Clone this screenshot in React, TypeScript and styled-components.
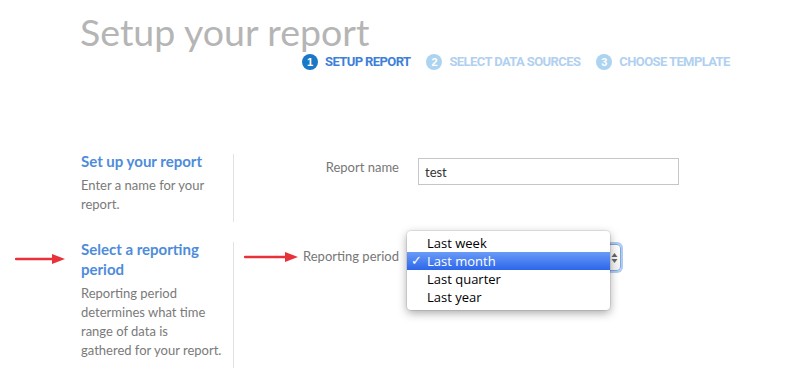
import React from "react";
import styled, { createGlobalStyle } from "styled-components";

const GlobalStyle = createGlobalStyle`
  html, body { margin: 0; padding: 0; background: #ffffff; }
  body { font-family: Lato, "Open Sans", sans-serif; }
  * { box-sizing: border-box; }
`;

const Page = styled.div`
  width: 800px;
  height: 376px;
  overflow: hidden;
  background: #fff;
`;

const Header = styled.header`
  padding: 12px 0 0 80px;
`;

const Title = styled.h1`
  margin: 0;
  font-family: Lato, sans-serif;
  font-weight: 400;
  font-size: 37.5px;
  line-height: 40px;
  color: #b5b5b5;
`;

const Steps = styled.ol`
  list-style: none;
  margin: 2px 0 0 222px;
  padding: 0;
  display: flex;
  align-items: center;
  gap: 16px;
`;

const Step = styled.li<{ $active?: boolean }>`
  display: flex;
  align-items: center;
  gap: 7px;
  font-family: Roboto, sans-serif;
  font-weight: 700;
  font-size: 13px;
  letter-spacing: -0.6px;
  line-height: 16px;
  color: ${(p) => (p.$active ? "#3d7fd9" : "#b1d0f0")};
`;

const StepNum = styled.span<{ $active?: boolean }>`
  width: 16px;
  height: 16px;
  border-radius: 50%;
  background: ${(p) => (p.$active ? "#1b78c6" : "#acd3ef")};
  color: #fff;
  font-family: "Liberation Sans", sans-serif;
  font-weight: 700;
  font-size: 11px;
  letter-spacing: 0;
  display: flex;
  align-items: center;
  justify-content: center;
`;

const Main = styled.main`
  margin-top: 81px;
  display: flex;
  flex-direction: column;
  gap: 17px;
`;

const Section = styled.section`
  display: grid;
  grid-template-columns: 81px 144px 8px 1px 1fr;
  align-items: stretch;
`;

const Gutter = styled.div`
  padding: 10px 0 0 15px;
`;

const Info = styled.div`
  padding-bottom: 9px;
`;

const InfoTitle = styled.h2`
  margin: 0;
  font-family: Lato, sans-serif;
  font-weight: 700;
  font-size: 15px;
  line-height: 20px;
  color: #4d8cdb;
`;

const InfoText = styled.p`
  margin: 5px 0 0;
  font-family: Lato, sans-serif;
  font-size: 13px;
  line-height: 18.7px;
  color: #7a7a7a;
`;

const Divider = styled.div`
  grid-column: 4;
  margin-top: 3px;
  background: #e2e2e2;
`;

const FormRow = styled.div<{ $top: number }>`
  display: flex;
  align-items: flex-start;
  gap: 19px;
  padding-top: ${(p) => p.$top}px;
`;

const Label = styled.label<{ $top: number }>`
  width: 165px;
  margin-top: ${(p) => p.$top}px;
  display: flex;
  justify-content: flex-end;
  align-items: center;
  gap: 5px;
  font-family: Lato, sans-serif;
  font-size: 13px;
  line-height: 19px;
  color: #777;
`;

const TextInput = styled.div`
  width: 261px;
  height: 27px;
  border: 1px solid #c6c6c6;
  padding-left: 6px;
  display: flex;
  align-items: center;
  font-family: Lato, sans-serif;
  font-size: 13px;
  color: #333;
`;

const SelectWrap = styled.div`
  position: relative;
  margin-left: -9px;
  width: 212px;
  height: 27px;
`;

const SelectBox = styled.div`
  width: 100%;
  height: 100%;
  border: 1px solid #7fa9e0;
  border-radius: 4px;
  box-shadow: 0 0 0 2px rgba(110, 160, 230, 0.55);
  background: linear-gradient(#fff, #f2f2f2);
  display: flex;
  justify-content: flex-end;
  align-items: center;
  padding-right: 2px;
`;

const Menu = styled.ul`
  position: absolute;
  left: -2px;
  top: -13px;
  width: 203px;
  margin: 0;
  padding: 3px 0 4px;
  list-style: none;
  background: #fff;
  border-radius: 4px;
  box-shadow: 0 3px 10px rgba(0, 0, 0, 0.35), 0 0 0 1px rgba(0, 0, 0, 0.08);
`;

const MenuItem = styled.li<{ $selected?: boolean }>`
  position: relative;
  height: 18px;
  line-height: 18px;
  padding-left: 20px;
  font-family: "Open Sans", sans-serif;
  font-size: 13px;
  font-weight: 500;
  color: ${(p) => (p.$selected ? "#fff" : "#000")};
  background: ${(p) =>
    p.$selected ? "linear-gradient(#6a9bf7, #2c66ea)" : "transparent"};
`;

const Check = styled.span`
  position: absolute;
  left: 4px;
  top: 0;
  font-family: "DejaVu Sans", sans-serif;
  font-weight: 700;
  font-size: 13px;
`;

const Arrow = ({ width = 50 }: { width?: number }) => (
  <svg width={width} height="12" viewBox={`0 0 ${width} 12`}>
    <line x1="1" y1="6" x2={width - 11} y2="6" stroke="#e8323a" strokeWidth="2.4" strokeLinecap="round" />
    <polygon points={`${width - 13},1 ${width},6 ${width - 13},11`} fill="#e8323a" />
  </svg>
);

const Updown = () => (
  <svg width="7" height="12" viewBox="0 0 7 12">
    <polygon points="3.5,1 6.5,5 0.5,5" fill="#666" />
    <polygon points="3.5,11 6.5,7 0.5,7" fill="#666" />
  </svg>
);

export default function App() {
  return (
    <Page>
      <GlobalStyle />
      <Header>
        <Title>Setup your report</Title>
        <Steps>
          <Step $active>
            <StepNum $active>1</StepNum>SETUP REPORT
          </Step>
          <Step>
            <StepNum>2</StepNum>SELECT DATA SOURCES
          </Step>
          <Step>
            <StepNum>3</StepNum>CHOOSE TEMPLATE
          </Step>
        </Steps>
      </Header>
      <Main>
        <Section>
          <Gutter />
          <Info>
            <InfoTitle>Set up your report</InfoTitle>
            <InfoText>Enter a name for your report.</InfoText>
          </Info>
          <Divider />
          <FormRow $top={7}>
            <Label $top={0}>Report name</Label>
            <TextInput>test</TextInput>
          </FormRow>
        </Section>
        <Section>
          <Gutter>
            <Arrow />
          </Gutter>
          <Info>
            <InfoTitle>Select a reporting period</InfoTitle>
            <InfoText>
              Reporting period determines what time range of data is
              <br />
              gathered for your report.
            </InfoText>
          </Info>
          <Divider />
          <FormRow $top={5}>
            <Label $top={3}>
              <Arrow width={54} />
              Reporting period
            </Label>
            <SelectWrap>
              <SelectBox>
                <Updown />
              </SelectBox>
              <Menu>
                <MenuItem>Last week</MenuItem>
                <MenuItem $selected>
                  <Check>✓</Check>Last month
                </MenuItem>
                <MenuItem>Last quarter</MenuItem>
                <MenuItem>Last year</MenuItem>
              </Menu>
            </SelectWrap>
          </FormRow>
        </Section>
      </Main>
    </Page>
  );
}
